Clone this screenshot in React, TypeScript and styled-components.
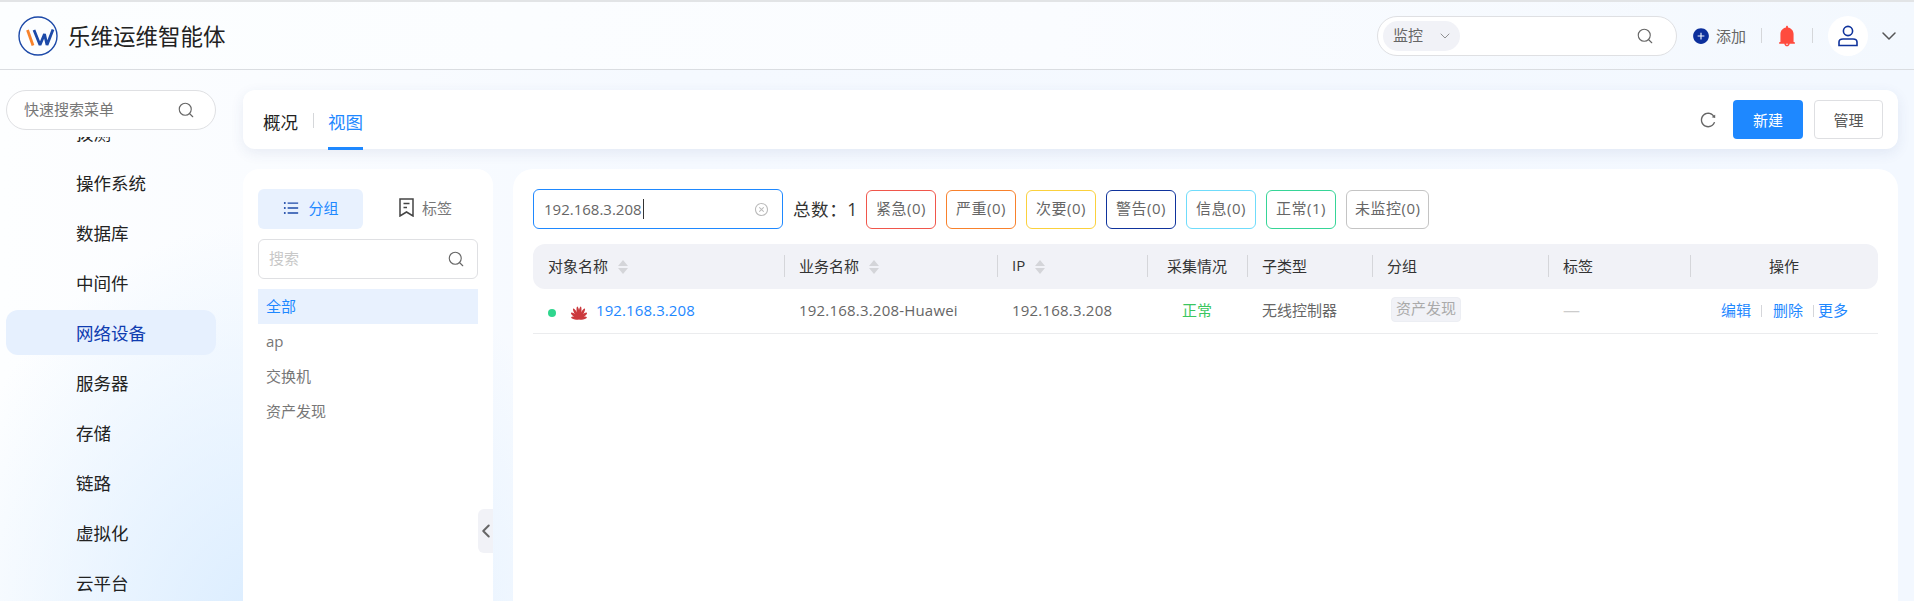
import React from "react"
import styled, { createGlobalStyle } from "styled-components"
import { ChevronDown, ChevronLeft, Search } from "lucide-react"
import {
	AiFillBell,
	AiFillPlusCircle,
	AiOutlineCloseCircle,
	AiOutlineReload,
	AiOutlineUnorderedList,
} from "react-icons/ai"

const GlobalStyle = createGlobalStyle`
	html, body {
		margin: 0;
		padding: 0;
		height: 100%;
		overflow: hidden;
	}
	body {
		font-family: "Open Sans", "Noto Sans CJK SC", sans-serif;
		font-size: 15px;
		color: #222;
	}
	* {
		box-sizing: border-box;
	}
`

const COLUMNS = "251px 213px 150px 100px 125px 176px 142px 188px"

const menuItems = ["拨测", "操作系统", "数据库", "中间件", "网络设备", "服务器", "存储", "链路", "虚拟化", "云平台"]
const groups = ["全部", "ap", "交换机", "资产发现"]
const levels = [
	{ label: "紧急(0)", color: "#f0564b" },
	{ label: "严重(0)", color: "#f8812c" },
	{ label: "次要(0)", color: "#fbd13c" },
	{ label: "警告(0)", color: "#0f339c" },
	{ label: "信息(0)", color: "#6fdcfb" },
	{ label: "正常(1)", color: "#36d597" },
	{ label: "未监控(0)", color: "#c4c4c4" },
]

const Logo = () => (
	<svg width="40" height="40" viewBox="0 0 40 40" fill="none">
		<circle cx="20" cy="20" r="19" stroke="#1c49a8" strokeWidth="1.4" />
		<path d="M9.5 14 L15 29.5" stroke="#f7822b" strokeWidth="2.8" />
		<path d="M16 14 L22 29 L26.5 18 L29 29 L35 13.5" stroke="#1c49a8" strokeWidth="2.8" strokeLinejoin="bevel" />
	</svg>
)

const HuaweiLogo = () => (
	<HuaweiMark width="18" height="15" viewBox="0 0 18 15" fill="#cb3a3e">
		{[
			[-78, 8],
			[-52, 10],
			[-29, 12],
			[-8, 12.5],
			[8, 12.5],
			[29, 12],
			[52, 10],
			[78, 8],
		].map(([angle, length]) => (
			<ellipse key={angle} cx="9" cy={14 - length / 2} rx="1.4" ry={length / 2} transform={`rotate(${angle} 9 14)`} />
		))}
	</HuaweiMark>
)

const UserIcon = () => (
	<svg width="22" height="22" viewBox="0 0 22 22" fill="none" stroke="#0f339c" strokeWidth="1.6">
		<circle cx="11" cy="6" r="4.6" />
		<path d="M2 20.5 V17 Q2 14 6 14 H16 Q20 14 20 17 V20.5 Z" />
	</svg>
)

const TagIcon = () => (
	<svg width="15" height="19" viewBox="0 0 15 19" fill="none" stroke="#444" strokeWidth="1.5">
		<path d="M1 1 H14 V18 L7.5 14 L1 18 Z" />
		<path d="M4.5 5.5 H10.5 M4.5 9.5 H8" />
	</svg>
)

const SortIcon = () => (
	<SortMark width="10" height="14" viewBox="0 0 10 14" fill="#d4d5d9">
		<path d="M5 0 L10 6 H0 Z M0 8 H10 L5 14 Z" />
	</SortMark>
)

const SearchIcon = () => <Search size={18} strokeWidth={1.5} color="#666" />

const App: React.FC = () => {
	return (
		<Page>
			<GlobalStyle />
			<Header>
				<Brand>
					<Logo />
					<BrandName>乐维运维智能体</BrandName>
				</Brand>
				<HeaderTools>
					<GlobalSearch>
						<ScopeSelect>
							<Hint>监控</Hint>
							<ChevronDown size={16} strokeWidth={1.2} color="#777" />
						</ScopeSelect>
						<SearchIcon />
					</GlobalSearch>
					<AddAction>
						<AiFillPlusCircle size={18} color="#0c2f9c" />
						添加
					</AddAction>
					<ToolDivider />
					<BellSlot>
						<AiFillBell size={24} color="#ff4b3e" />
					</BellSlot>
					<ToolDivider />
					<Avatar>
						<UserIcon />
					</Avatar>
					<ChevronDown size={24} strokeWidth={1.5} color="#555" />
				</HeaderTools>
			</Header>
			<Body>
				<Sidebar>
					<MenuSearch>
						<Hint>快速搜索菜单</Hint>
						<SearchIcon />
					</MenuSearch>
					<MenuViewport>
						<MenuList>
							{menuItems.map(item => (
								<MenuItem key={item} $active={item === "网络设备"}>
									{item}
								</MenuItem>
							))}
						</MenuList>
					</MenuViewport>
				</Sidebar>
				<Main>
					<TabBar>
						<Tabs>
							<Tab>概况</Tab>
							<TabDivider />
							<Tab $active>视图</Tab>
						</Tabs>
						<TabActions>
							<AiOutlineReload size={18} color="#666" />
							<PrimaryButton>新建</PrimaryButton>
							<GhostButton>管理</GhostButton>
						</TabActions>
					</TabBar>
					<Content>
						<GroupPanel>
							<Segments>
								<Segment $active>
									<AiOutlineUnorderedList size={18} color="#1c49a8" />
									分组
								</Segment>
								<Segment $shifted>
									<TagIcon />
									标签
								</Segment>
							</Segments>
							<GroupSearch>
								<Hint>搜索</Hint>
								<SearchIcon />
							</GroupSearch>
							<GroupList>
								{groups.map(group => (
									<GroupItem key={group} $active={group === "全部"}>
										{group}
									</GroupItem>
								))}
							</GroupList>
							<CollapseHandle>
								<ChevronLeft size={22} strokeWidth={2.2} color="#666" />
							</CollapseHandle>
						</GroupPanel>
						<TablePanel>
							<FilterBar>
								<FilterInput>
									<FilterValue>192.168.3.208</FilterValue>
									<AiOutlineCloseCircle size={15} color="#bbb" />
								</FilterInput>
								<Total>总数：1</Total>
								<Levels>
									{levels.map(level => (
										<LevelTag key={level.label} $color={level.color}>
											{level.label}
										</LevelTag>
									))}
								</Levels>
							</FilterBar>
							<TableHead>
								<HeadCell>
									对象名称
									<SortIcon />
								</HeadCell>
								<HeadCell $divider>
									业务名称
									<SortIcon />
								</HeadCell>
								<HeadCell $divider>
									IP
									<SortIcon />
								</HeadCell>
								<HeadCell $divider $center>
									采集情况
								</HeadCell>
								<HeadCell $divider>子类型</HeadCell>
								<HeadCell $divider>分组</HeadCell>
								<HeadCell $divider>标签</HeadCell>
								<HeadCell $divider $center>
									操作
								</HeadCell>
							</TableHead>
							<TableRow>
								<RowCell>
									<StatusDot />
									<HuaweiLogo />
									<ObjectLink>192.168.3.208</ObjectLink>
								</RowCell>
								<RowCell $latin>192.168.3.208-Huawei</RowCell>
								<RowCell $latin>192.168.3.208</RowCell>
								<RowCell $center>
									<Healthy>正常</Healthy>
								</RowCell>
								<RowCell>无线控制器</RowCell>
								<RowCell>
									<GroupTag>资产发现</GroupTag>
								</RowCell>
								<RowCell>
									<EmptyMark>—</EmptyMark>
								</RowCell>
								<ActionCell>
									<ActionLink>编辑</ActionLink>
									<ActionDivider />
									<ActionLink>删除</ActionLink>
									<ActionDivider $tight />
									<ActionLink>更多</ActionLink>
								</ActionCell>
							</TableRow>
						</TablePanel>
					</Content>
				</Main>
			</Body>
		</Page>
	)
}

export default App

const Page = styled.div`
	display: flex;
	flex-direction: column;
	height: 100vh;
	overflow: hidden;
	border-top: 2px solid #e2e4e6;
	background: radial-gradient(ellipse 340px 420px at 270px 640px, #d9ecff 0%, rgba(217, 236, 255, 0) 100%),
		linear-gradient(90deg, #fdfeff 0%, #f5f9ff 35%, #f3f8ff 100%);
`

const Header = styled.header`
	display: flex;
	flex: none;
	align-items: center;
	justify-content: space-between;
	height: 68px;
	padding: 0 13px 0 18px;
	border-bottom: 1px solid #dadde1;
	background: linear-gradient(90deg, #fcfeff 0%, #fafcff 55%, #f3f8fe 100%);
`

const Brand = styled.div`
	display: flex;
	align-items: center;
	gap: 10px;
`

const BrandName = styled.div`
	font-size: 22.5px;
	color: #222;
`

const HeaderTools = styled.div`
	display: flex;
	align-items: center;
	color: #666;
`

const Hint = styled.span`
	padding-bottom: 3px;
`

const GlobalSearch = styled.div`
	display: flex;
	align-items: center;
	justify-content: space-between;
	width: 300px;
	height: 40px;
	padding: 0 22px 0 5px;
	border: 1px solid #dfe0e3;
	border-radius: 20px;
	background: #fff;
`

const ScopeSelect = styled.div`
	display: flex;
	align-items: center;
	justify-content: space-between;
	width: 77px;
	height: 30px;
	padding: 0 7px 0 10px;
	border-radius: 15px;
	background: #f1f2f7;
	color: #666;
`

const AddAction = styled.div`
	display: flex;
	align-items: center;
	gap: 6px;
	margin-left: 15px;
`

const ToolDivider = styled.span`
	width: 1px;
	height: 15px;
	margin: 0 15px;
	background: #d5d7da;
`

const BellSlot = styled.span`
	display: flex;
	margin: 0 -2px;
`

const Avatar = styled.div`
	display: flex;
	align-items: center;
	justify-content: center;
	width: 40px;
	height: 40px;
	margin-right: 9px;
	border-radius: 50%;
	background: #fff;
`

const Body = styled.div`
	display: flex;
	flex: 1;
	min-height: 0;
`

const Sidebar = styled.aside`
	display: flex;
	flex: none;
	flex-direction: column;
	width: 243px;
	padding: 20px 27px 0 6px;
`

const MenuSearch = styled.div`
	display: flex;
	flex: none;
	align-items: center;
	justify-content: space-between;
	height: 40px;
	padding: 0 20px 0 17px;
	border: 1px solid #dfe0e3;
	border-radius: 20px;
	background: #fff;
	color: #777;
`

const MenuViewport = styled.nav`
	flex: 1;
	min-height: 0;
	margin-top: 7px;
	overflow: hidden;
`

const MenuList = styled.div`
	display: flex;
	flex-direction: column;
	gap: 5px;
	margin-top: -27px;
`

const MenuItem = styled.div<{ $active?: boolean }>`
	display: flex;
	flex: none;
	align-items: center;
	height: 45px;
	padding-left: 70px;
	border-radius: 12px;
	font-size: 17.5px;
	color: ${props => (props.$active ? "#0f3cb0" : "#222")};
	background: ${props => (props.$active ? "#e6f0fe" : "transparent")};
`

const Main = styled.main`
	display: flex;
	flex: 1;
	flex-direction: column;
	gap: 20px;
	min-width: 0;
	padding: 20px 16px 0 0;
`

const TabBar = styled.div`
	display: flex;
	flex: none;
	align-items: center;
	justify-content: space-between;
	height: 59px;
	padding: 0 15px 0 20px;
	border-radius: 12px;
	background: #fff;
	box-shadow: 0 4px 14px rgba(40, 70, 130, 0.09);
`

const Tabs = styled.div`
	display: flex;
	align-self: stretch;
	align-items: flex-start;
	gap: 15px;
`

const Tab = styled.div<{ $active?: boolean }>`
	display: flex;
	align-items: center;
	height: 60px;
	padding-top: 2px;
	font-size: 17.5px;
	color: ${props => (props.$active ? "#1e88ff" : "#222")};
	border-bottom: 3px solid ${props => (props.$active ? "#1e88ff" : "transparent")};
	border-top: 3px solid transparent;
`

const TabDivider = styled.span`
	width: 1px;
	height: 15px;
	margin: 23px -1px 0 0;
	background: #d5d7da;
`

const TabActions = styled.div`
	display: flex;
	align-items: center;
`

const PrimaryButton = styled.button`
	width: 70px;
	height: 39px;
	margin-left: 16px;
	border: none;
	border-radius: 4px;
	background: #1e88ff;
	color: #fff;
	font: inherit;
`

const GhostButton = styled.button`
	width: 69px;
	height: 39px;
	margin-left: 11px;
	border: 1px solid #dedfe2;
	border-radius: 4px;
	background: #fff;
	color: #555;
	font: inherit;
`

const Content = styled.div`
	display: flex;
	flex: 1;
	gap: 20px;
	min-height: 0;
`

const GroupPanel = styled.section`
	position: relative;
	flex: none;
	width: 250px;
	padding: 20px 15px;
	border-radius: 16px 16px 0 0;
	background: #fff;
`

const Segments = styled.div`
	display: grid;
	grid-template-columns: 105px 115px;
`

const Segment = styled.div<{ $active?: boolean; $shifted?: boolean }>`
	display: flex;
	align-items: center;
	justify-content: center;
	gap: 8px;
	height: 40px;
	padding-bottom: 3px;
	padding-left: ${props => (props.$shifted ? "10px" : "0")};
	border-radius: 6px;
	color: ${props => (props.$active ? "#1e88ff" : "#777")};
	background: ${props => (props.$active ? "#e8f1fe" : "transparent")};
`

const GroupSearch = styled.div`
	display: flex;
	align-items: center;
	justify-content: space-between;
	height: 40px;
	margin-top: 10px;
	padding: 0 12px 0 10px;
	border: 1px solid #dfe0e3;
	border-radius: 6px;
	color: #c8c8c8;
`

const GroupList = styled.div`
	display: flex;
	flex-direction: column;
	margin-top: 10px;
`

const GroupItem = styled.div<{ $active?: boolean }>`
	display: flex;
	align-items: center;
	height: 35px;
	padding: 0 0 2px 8px;
	color: ${props => (props.$active ? "#1e88ff" : "#777")};
	background: ${props => (props.$active ? "#e8f1fe" : "transparent")};
`

const CollapseHandle = styled.div`
	position: absolute;
	top: 340px;
	right: 0;
	display: flex;
	align-items: center;
	justify-content: center;
	width: 15px;
	height: 44px;
	border-radius: 6px 0 0 6px;
	background: #f1f2f7;

	svg {
		flex: none;
	}
`

const TablePanel = styled.section`
	flex: 1;
	min-width: 0;
	padding: 20px 20px 0;
	border-radius: 20px 20px 0 0;
	background: #fff;
`

const FilterBar = styled.div`
	display: flex;
	align-items: center;
	height: 40px;
`

const FilterInput = styled.div`
	display: flex;
	align-items: center;
	justify-content: space-between;
	width: 250px;
	height: 40px;
	padding: 0 13px 0 10px;
	border: 1px solid #1e88ff;
	border-radius: 6px;
	color: #666;
`

const FilterValue = styled.span`
	padding-right: 1px;
	border-right: 1px solid #333;
	line-height: 20px;
`

const Total = styled.div`
	width: 83px;
	padding: 0 0 1px 10px;
	font-size: 17.5px;
	letter-spacing: 0.6px;
	color: #333;
`

const Levels = styled.div`
	display: flex;
	gap: 10px;
`

const LevelTag = styled.div<{ $color: string }>`
	display: flex;
	align-items: center;
	justify-content: center;
	min-width: 70px;
	height: 39px;
	padding: 0 8px 3px;
	border: 1px solid ${props => props.$color};
	border-radius: 6px;
	color: #666;
	letter-spacing: 0.5px;
`

const TableHead = styled.div`
	display: grid;
	grid-template-columns: ${COLUMNS};
	height: 45px;
	margin-top: 15px;
	border-radius: 12px;
	background: #f1f2f7;
`

const HeadCell = styled.div<{ $divider?: boolean; $center?: boolean }>`
	position: relative;
	display: flex;
	align-items: center;
	justify-content: ${props => (props.$center ? "center" : "flex-start")};
	padding: 0 0 3px ${props => (props.$center ? "0" : "15px")};
	color: #333;

	&::before {
		content: "";
		display: ${props => (props.$divider ? "block" : "none")};
		position: absolute;
		left: 0;
		top: 11px;
		width: 1px;
		height: 22px;
		background: #d5d6da;
	}
`

const SortMark = styled.svg`
	margin: 3px 0 0 10px;
`

const TableRow = styled.div`
	display: grid;
	grid-template-columns: ${COLUMNS};
	height: 45px;
	border-bottom: 1px solid #ebecee;
	color: #666;
`

const RowCell = styled.div<{ $center?: boolean; $latin?: boolean }>`
	display: flex;
	align-items: center;
	justify-content: ${props => (props.$center ? "center" : "flex-start")};
	padding: 0 0 3px ${props => (props.$center ? "0" : "15px")};
	letter-spacing: ${props => (props.$latin ? "0.2px" : "normal")};
`

const StatusDot = styled.span`
	width: 8px;
	height: 8px;
	margin: 6px 14px 0 0;
	border-radius: 50%;
	background: #2fd68e;
`

const HuaweiMark = styled.svg`
	margin-top: 6px;
`

const ObjectLink = styled.a`
	margin-left: 8px;
	color: #1e88ff;
	letter-spacing: 0.1px;
`

const Healthy = styled.span`
	color: #3cc65f;
`

const GroupTag = styled.span`
	height: 25px;
	margin-left: 4px;
	padding: 0 4px;
	line-height: 21px;
	border: 1px solid #eceef3;
	border-radius: 4px;
	background: #f1f2f7;
	color: #aaa;
`

const EmptyMark = styled.span`
	font-size: 17px;
	color: #ccc;
`

const ActionCell = styled.div`
	display: flex;
	align-items: center;
	padding: 0 0 3px 31px;
`

const ActionLink = styled.a`
	color: #1e88ff;
`

const ActionDivider = styled.span<{ $tight?: boolean }>`
	width: 1px;
	height: 12px;
	margin: ${props => (props.$tight ? "3px 4px 0 10px" : "3px 11px 0 10px")};
	background: #d5d6da;
`
